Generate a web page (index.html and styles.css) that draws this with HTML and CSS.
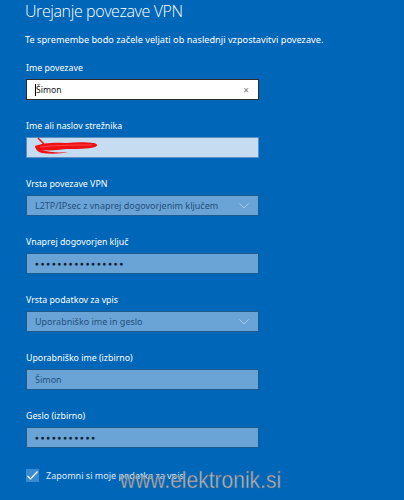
FILE: index.html
```html
<!DOCTYPE html>
<html lang="sl">
<head>
    <meta charset="utf-8">
    <title>Urejanje povezave VPN</title>
    <link rel="stylesheet" href="styles.css">
</head>
<body>
    <div class="page">
        <h1>Urejanje povezave VPN</h1>
        <p class="subhead">Te spremembe bodo začele veljati ob naslednji vzpostavitvi povezave.</p>

        <div class="field">
            <label>Ime povezave</label>
            <div class="box box-active">
                <span class="caret"></span><span>Šimon</span>
                <span class="clear">&times;</span>
            </div>
        </div>

        <div class="field">
            <label>Ime ali naslov strežnika</label>
            <div class="box box-light">
                <svg class="scribble" width="72" height="18" viewBox="0 0 72 18">
                    <path d="M6 1 L12 7" stroke="#ee1111" stroke-width="1.5" fill="none"/>
                    <path d="M3 9 C10 6 22 5 34 6 C44 5 54 5 62 6 C66 7 66 9 63 10 C56 12 44 12 34 12 C26 13 18 14 10 13 C16 15 26 16 36 15 C28 17 18 17 10 16 C6 15 3 12 3 9 Z" fill="#ee1111"/>
                    <path d="M8 10 C24 8 44 8 60 8" stroke="#ff5555" stroke-width="0.8" fill="none"/>
                </svg>
            </div>
        </div>

        <div class="field">
            <label>Vrsta povezave VPN</label>
            <div class="box">
                <span class="dim">L2TP/IPsec z vnaprej dogovorjenim ključem</span>
                <svg class="chevron" width="10" height="6" viewBox="0 0 10 6"><path d="M0.5 0.5 L5 5 L9.5 0.5" stroke="#a9c9e6" fill="none"/></svg>
            </div>
        </div>

        <div class="field">
            <label>Vnaprej dogovorjen ključ</label>
            <div class="box"><span class="dots">●●●●●●●●●●●●●●●●</span></div>
        </div>

        <div class="field">
            <label>Vrsta podatkov za vpis</label>
            <div class="box">
                <span class="dim">Uporabniško ime in geslo</span>
                <svg class="chevron" width="10" height="6" viewBox="0 0 10 6"><path d="M0.5 0.5 L5 5 L9.5 0.5" stroke="#a9c9e6" fill="none"/></svg>
            </div>
        </div>

        <div class="field">
            <label>Uporabniško ime (izbirno)</label>
            <div class="box"><span class="dim">Šimon</span></div>
        </div>

        <div class="field">
            <label>Geslo (izbirno)</label>
            <div class="box"><span class="dots">●●●●●●●●●●●</span></div>
        </div>

        <div class="remember">
            <span class="check">
                <svg width="13" height="11" viewBox="0 0 13 11"><path d="M1.5 6 L4.5 9 L11.5 1.5" stroke="#ffffff" stroke-width="1.2" fill="none"/></svg>
            </span>
            <span class="remember-text">Zapomni si moje podatke za vpis</span>
            <span class="watermark">www.elektronik.si</span>
        </div>
    </div>
</body>
</html>
```

FILE: styles.css
```css
body {
    margin: 0;
    background-color: #0067b8;
    font-family: 'Noto Sans', 'Open Sans', sans-serif;
    color: #ffffff;
    height: 500px;
    overflow: hidden;
}

.page {
    padding: 0 0 0 25px;
}

h1 {
    font-family: 'Open Sans', 'Noto Sans', sans-serif;
    font-weight: 300;
    font-size: 16px;
    line-height: 22px;
    margin: 0;
    letter-spacing: -0.4px;
}

.subhead {
    font-size: 9.2px;
    line-height: 14px;
    margin: 11px 0 14px 0;
}

.field {
    margin-bottom: 19px;
}

.field label {
    display: block;
    font-size: 8.8px;
    line-height: 14px;
    margin-bottom: 4px;
    margin-left: 1px;
}

.box {
    position: relative;
    height: 19px;
    width: 215px;
    margin-left: 1px;
    padding: 0 8px;
    background-color: #6aa4d6;
    border: 1px solid #1d5a8e;
    display: flex;
    align-items: center;
    font-size: 8.6px;
}

.box-active {
    background-color: #ffffff;
    border-color: #2b2b2b;
    color: #111111;
}

.box-light {
    background-color: #c6ddf1;
    border-color: #5b8fbf;
}

.caret {
    display: inline-block;
    width: 1px;
    height: 12px;
    background-color: #000000;
}

.clear {
    position: absolute;
    right: 9px;
    top: 3px;
    font-size: 10px;
    color: #777777;
}

.scribble {
    margin-left: -3px;
    margin-top: -4px;
}

.dim {
    color: #1f4f7e;
    font-size: 9px;
}

.chevron {
    position: absolute;
    right: 9px;
    top: 7px;
}

.dots {
    color: #0c2236;
    font-size: 6.5px;
    letter-spacing: 1.7px;
}

.remember {
    position: relative;
    display: flex;
    align-items: center;
    margin-top: 4px;
    height: 16px;
}

.check {
    display: inline-flex;
    align-items: center;
    justify-content: center;
    width: 13px;
    height: 13px;
    background-color: #3a8ad0;
    margin-left: 1px;
    margin-right: 7px;
}

.remember-text {
    font-size: 9px;
    color: #dfeaf6;
}

.watermark {
    position: absolute;
    left: 95px;
    top: -1px;
    font-family: 'Liberation Sans', sans-serif;
    font-size: 24px;
    line-height: normal;
    color: #a9b7c6;
    -webkit-text-stroke: 0.5px #4f6073;
    transform: scaleX(0.875);
    transform-origin: left top;
}
```
